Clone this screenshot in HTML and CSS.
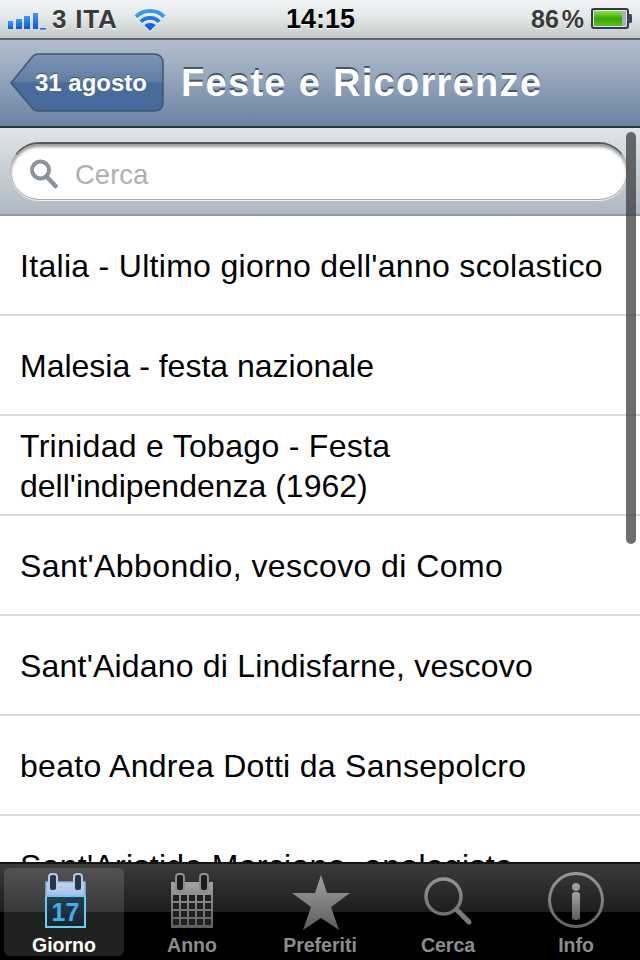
FILE: index.html
```html
<!DOCTYPE html>
<html lang="it">
<head>
<meta charset="utf-8">
<title>Feste e Ricorrenze</title>
<link rel="stylesheet" href="styles.css">
</head>
<body>
<svg class="defs" width="0" height="0" aria-hidden="true">
  <defs>
    <linearGradient id="grey" x1="0" y1="0" x2="0" y2="1"><stop offset="0" stop-color="#a2a2a2"/><stop offset="1" stop-color="#5c5c5c"/></linearGradient>
    <linearGradient id="greyStroke" gradientUnits="userSpaceOnUse" x1="0" y1="0" x2="0" y2="60"><stop offset="0" stop-color="#9c9c9c"/><stop offset="1" stop-color="#626262"/></linearGradient>
    <linearGradient id="blueTop" x1="0" y1="0" x2="0" y2="1"><stop offset="0" stop-color="#c5d3ee"/><stop offset="1" stop-color="#a6bfe8"/></linearGradient>
    <linearGradient id="calBody" x1="0" y1="0" x2="0" y2="1"><stop offset="0" stop-color="#24404f"/><stop offset="1" stop-color="#16222a"/></linearGradient>
    <linearGradient id="back" x1="0" y1="0" x2="0" y2="1"><stop offset="0" stop-color="#7e96b6"/><stop offset=".49" stop-color="#5f7ca3"/><stop offset=".5" stop-color="#496c9c"/><stop offset="1" stop-color="#486a9a"/></linearGradient>
    <linearGradient id="batt" x1="0" y1="0" x2="0" y2="1"><stop offset="0" stop-color="#8ce04a"/><stop offset=".5" stop-color="#3aa908"/><stop offset="1" stop-color="#58c11a"/></linearGradient>
    <linearGradient id="sig" x1="0" y1="0" x2="0" y2="1"><stop offset="0" stop-color="#3e9bf5"/><stop offset="1" stop-color="#0a56dc"/></linearGradient>
  </defs>
</svg>
<div class="screen">
  <header class="status">
    <div class="status-left">
      <svg class="signal" width="38" height="18" viewBox="0 0 38 18"><rect x="0" y="8" width="5" height="8" fill="url(#sig)"/><rect x="8" y="6" width="6" height="10" fill="url(#sig)"/><rect x="16" y="3" width="6" height="13" fill="url(#sig)"/><rect x="25" y="0" width="5" height="16" fill="url(#sig)"/><rect x="32" y="15" width="6" height="1.500" fill="#1a6be6"/></svg>
      <span class="carrier">3 ITA</span>
      <svg class="wifi" width="34" height="26" viewBox="0 0 34 26"><path d="M17 25 L11.300 19.300 A8 8 0 0 1 22.700 19.300 Z" fill="#0f62e0"/><path d="M7.800 15.800 A13 13 0 0 1 26.200 15.800" fill="none" stroke="#1f7bea" stroke-width="4"/><path d="M2.900 10.900 A20 20 0 0 1 31.100 10.900" fill="none" stroke="#3a97f2" stroke-width="4"/></svg>
    </div>
    <div class="time">14:15</div>
    <div class="status-right">
      <span class="percent">86 %</span>
      <svg class="battery" width="42" height="22" viewBox="0 0 42 22"><rect x="1" y="1" width="36" height="19" rx="2" fill="#e4e6e6" stroke="#2f3a4d" stroke-width="2"/><rect x="3" y="3" width="28" height="15" fill="url(#batt)"/><rect x="31" y="3" width="4" height="15" fill="#a9aeb0"/><rect x="37" y="6" width="4" height="9" rx="1.500" fill="#3b4a63"/></svg>
    </div>
  </header>

  <nav class="navbar">
    <a class="back">
      <svg class="back-shape" width="156" height="60" viewBox="0 0 156 60"><path d="M2 30 L24 3 Q26 1 30 1 H144 Q154 1 154 10 V50 Q154 58 144 58 H30 Q26 58 24 56 Z" fill="url(#back)" stroke="#3d5474" stroke-width="1.500"/></svg>
      <span class="back-label">31 agosto</span>
    </a>
    <h1 class="title">Feste e Ricorrenze</h1>
  </nav>

  <main class="content">
    <div class="search">
      <div class="field">
        <svg class="lens" width="30" height="30" viewBox="0 0 30 30"><circle cx="10.500" cy="11" r="8.500" fill="none" stroke="#8b949c" stroke-width="4"/><path d="M16.500 17.500 L25.500 27" stroke="#8b949c" stroke-width="4.500" stroke-linecap="round"/></svg>
        <span class="placeholder">Cerca</span>
      </div>
    </div>
    <ul class="list">
      <li class="row"><span>Italia - Ultimo giorno dell'anno scolastico</span></li>
      <li class="row fit-0"><span>Malesia - festa nazionale</span></li>
      <li class="row"><span>Trinidad e Tobago - Festa <span class="fit-0">dell'indipendenza (1962)</span></span></li>
      <li class="row fit-4"><span>Sant'Abbondio, vescovo di Como</span></li>
      <li class="row fit-2"><span>Sant'Aidano di Lindisfarne, vescovo</span></li>
      <li class="row"><span>beato Andrea Dotti da Sansepolcro</span></li>
      <li class="row"><span>Sant'Aristide Marciano, apologista</span></li>
    </ul>
    <div class="scrollbar"></div>
  </main>

  <footer class="tabbar">
    <div class="tab active">
      <svg class="tab-icon" width="46" height="60" viewBox="0 0 46 60">
        <rect x="5" y="12" width="39" height="14" fill="url(#blueTop)" stroke="#8fb0e0" stroke-width="1.500"/>
        <rect x="5" y="26" width="39" height="31" fill="url(#calBody)" stroke="#67cdf2" stroke-width="2"/>
        <rect x="8" y="4" width="8" height="17" rx="3" fill="#27364a" stroke="#b5cbea" stroke-width="2"/>
        <rect x="33" y="4" width="8" height="17" rx="3" fill="#27364a" stroke="#b5cbea" stroke-width="2"/>
        <text x="24.500" y="51" class="cal-day">17</text>
      </svg>
      <span class="tab-label">Giorno</span>
    </div>
    <div class="tab">
      <svg class="tab-icon" width="46" height="60" viewBox="0 0 46 60">
        <path d="M2 12 H44 V58 H2 Z" fill="url(#grey)"/>
        <g fill="#1f1f1f"><rect x="4" y="25" width="6" height="6"/><rect x="12" y="25" width="6" height="6"/><rect x="20" y="25" width="6" height="6"/><rect x="28" y="25" width="6" height="6"/><rect x="36" y="25" width="6" height="6"/><rect x="4" y="33" width="6" height="6"/><rect x="12" y="33" width="6" height="6"/><rect x="20" y="33" width="6" height="6"/><rect x="28" y="33" width="6" height="6"/><rect x="36" y="33" width="6" height="6"/><rect x="4" y="41" width="6" height="6"/><rect x="12" y="41" width="6" height="6"/><rect x="20" y="41" width="6" height="6"/><rect x="28" y="41" width="6" height="6"/><rect x="36" y="41" width="6" height="6"/><rect x="4" y="49" width="6" height="6"/><rect x="12" y="49" width="6" height="6"/><rect x="20" y="49" width="6" height="6"/><rect x="28" y="49" width="6" height="6"/><rect x="36" y="49" width="6" height="6"/></g>
        <rect x="7" y="4" width="8" height="17" rx="3" fill="#1c1c1c" stroke="#8d8d8d" stroke-width="2"/>
        <rect x="31" y="4" width="8" height="17" rx="3" fill="#1c1c1c" stroke="#8d8d8d" stroke-width="2"/>
      </svg>
      <span class="tab-label">Anno</span>
    </div>
    <div class="tab">
      <svg class="tab-icon" width="60" height="60" viewBox="0 0 60 60"><path d="M2 23 L25 23 L31 5 L37 23 L60 23 L41 37 L49 60 L31 48 L13 60 L21 37 Z" fill="url(#grey)"/></svg>
      <span class="tab-label">Preferiti</span>
    </div>
    <div class="tab">
      <svg class="tab-icon" width="52" height="60" viewBox="0 0 52 60"><circle cx="21.500" cy="26.500" r="17.500" fill="none" stroke="url(#greyStroke)" stroke-width="3.500"/><path d="M35 40 L47 52" stroke="#7a7a7a" stroke-width="5" stroke-linecap="round"/></svg>
      <span class="tab-label">Cerca</span>
    </div>
    <div class="tab">
      <svg class="tab-icon" width="58" height="60" viewBox="0 0 58 60"><circle cx="29" cy="30" r="26.500" fill="none" stroke="url(#greyStroke)" stroke-width="3"/><circle cx="29" cy="17" r="4" fill="#9a9a9a"/><rect x="25" y="22" width="8" height="28" rx="3" fill="url(#grey)"/></svg>
      <span class="tab-label">Info</span>
    </div>
  </footer>
</div>
</body>
</html>
```
FILE: styles.css
```css
* { box-sizing: border-box; }
html, body { margin: 0; padding: 0; background: #fff; }
body { font-family: "Liberation Sans", Arial, sans-serif; }
.defs { position: absolute; }

.screen {
  width: 640px;
  height: 960px;
  display: flex;
  flex-direction: column;
  overflow: hidden;
}

/* Status bar */
.status {
  height: 40px;
  flex: none;
  display: grid;
  grid-template-columns: 1fr auto 1fr;
  align-items: center;
  padding: 0 7px 0 8px;
  background: linear-gradient(#eff3f5, #e6eaeb 40%, #c3c8c9);
  border-bottom: 2px solid #5f6468;
  color: #3a3a3a;
}
.status-left, .status-right { display: flex; align-items: center; }
.status-right { justify-content: flex-end; gap: 7px; }
.signal { margin-top: 5px; }
.carrier {
  margin-left: 6px;
  font-size: 26px;
  font-weight: bold;
  letter-spacing: .8px;
  text-shadow: 0 1px 0 #fff;
}
.wifi { margin-left: 15px; filter: drop-shadow(0 1px 0 #fff); }
.time {
  font-size: 27px;
  font-weight: bold;
  color: #000;
  text-shadow: 0 1px 0 #fff;
}
.percent {
  font-size: 25px;
  font-weight: bold;
  word-spacing: -4px;
  text-shadow: 0 1px 0 #fff;
}

/* Navigation bar */
.navbar {
  height: 88px;
  flex: none;
  display: flex;
  align-items: center;
  padding: 0 0 0 9px;
  background: linear-gradient(#b4bfce, #6c83a3);
  border-bottom: 2px solid #2d3642;
}
.back {
  position: relative;
  width: 156px;
  height: 60px;
  flex: none;
  display: flex;
  align-items: center;
  justify-content: center;
  padding: 0 0 0 8px;
}
.back-shape { position: absolute; left: 0; top: 0; }
.back-label {
  position: relative;
  font-size: 24px;
  font-weight: bold;
  color: #fff;
  text-shadow: 0 -1px 0 #3b5274;
}
.title {
  margin: 0 0 0 16px;
  font-size: 38px;
  font-weight: bold;
  letter-spacing: 1.3px;
  white-space: nowrap;
  color: #fff;
  text-shadow: 0 -2px 0 #47566d;
}

/* Content */
.content {
  position: relative;
  flex: 1;
  min-height: 0;
  overflow: hidden;
  background: #fff;
}
.search {
  height: 88px;
  padding: 14px 12px 16px 10px;
  background: linear-gradient(#e1e5e8, #adb9c2);
  border-bottom: 2px solid #8e98a2;
}
.field {
  height: 58px;
  display: flex;
  align-items: center;
  padding-left: 19px;
  gap: 15px;
  background: #fff;
  border-radius: 29px;
  border: 1px solid #a8aeb2;
  border-top: 2px solid #55595c;
  box-shadow: inset 0 3px 3px #9b9b9b, 0 1px 0 #f1f3f5;
}
.lens { margin-top: 4px; flex: none; }
.placeholder { font-size: 27.500px; color: #b0b0b0; padding-top: 6px; }
.list { list-style: none; margin: 0; padding: 0; }
.row {
  height: 100px;
  display: flex;
  align-items: center;
  padding: 2px 20px 0;
  border-bottom: 2px solid #d9d9d9;
  font-size: 32px;
  line-height: 40px;
  letter-spacing: .3px;
  color: #000;
}
.fit-0 { letter-spacing: 0; }
.fit-2 { letter-spacing: .2px; }
.fit-4 { letter-spacing: .43px; }
.scrollbar {
  position: absolute;
  left: 626px;
  top: 4px;
  width: 10px;
  height: 412px;
  border-radius: 5px;
  background: rgba(60, 60, 60, .75);
}

/* Tab bar */
.tabbar {
  height: 98px;
  flex: none;
  display: grid;
  grid-template-columns: repeat(5, 128px);
  padding: 4px 0 4px;
  border-top: 2px solid #141414;
  background: linear-gradient(#3b3b3b, #1d1d1d 48px, #000 48px);
}
.tab {
  margin: 0 4px;
  display: flex;
  flex-direction: column;
  align-items: center;
  justify-content: flex-end;
  border-radius: 6px;
}
.tab.active { background: rgba(255, 255, 255, .13); }
.tab-icon { display: block; margin-bottom: 4px; flex: none; }
.tab-label {
  height: 22px;
  font-size: 19.500px;
  line-height: 22px;
  font-weight: bold;
  color: #8c8c8c;
}
.active .tab-label { color: #fff; }
.cal-day {
  font-family: "Liberation Sans", Arial, sans-serif;
  font-size: 25px;
  font-weight: bold;
  fill: #3fb1e6;
  text-anchor: middle;
}
```
